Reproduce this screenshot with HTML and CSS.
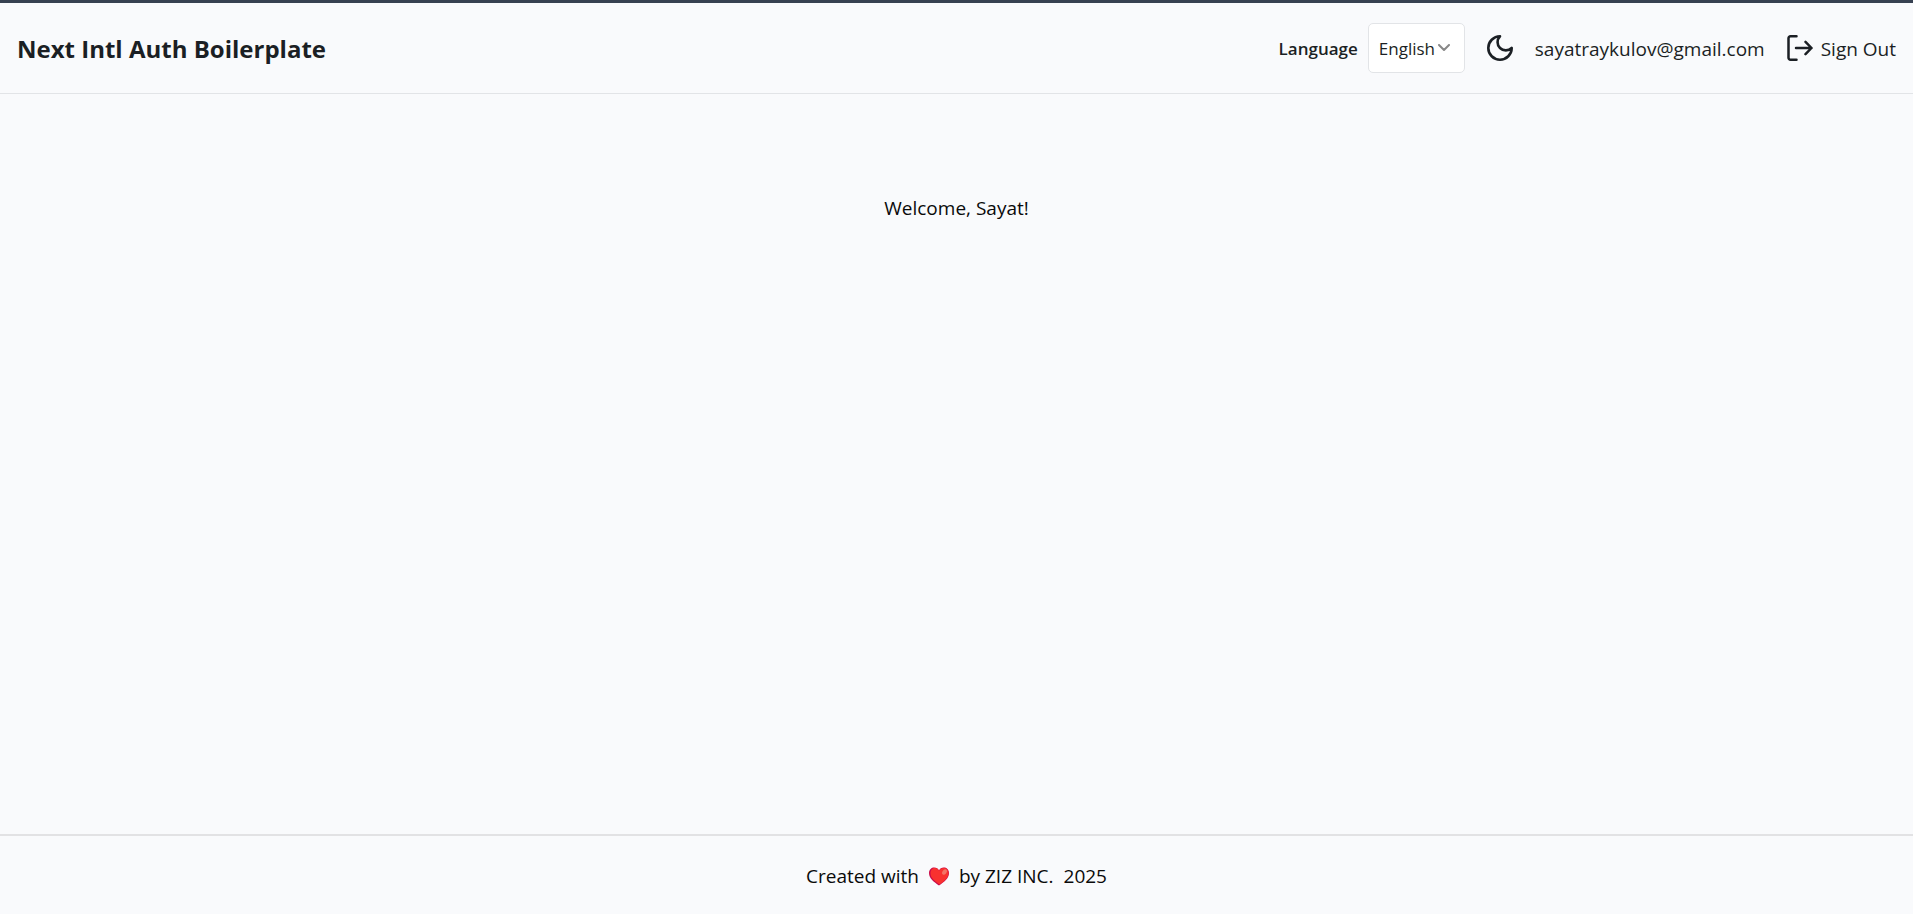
FILE: index.html
```html
<!DOCTYPE html>
<html lang="en">
<head>
<meta charset="utf-8">
<meta name="viewport" content="width=device-width, initial-scale=1">
<title>Next Intl Auth Boilerplate</title>
<link rel="stylesheet" href="styles.css">
</head>
<body>
<header class="header">
  <a class="brand" href="#">Next Intl Auth Boilerplate</a>
  <div class="actions">
    <div class="language">
      <label class="language-label" for="language">Language</label>
      <div class="select-wrap">
        <select class="select" id="language">
          <option>English</option>
        </select>
        <svg class="chevron" viewBox="0 0 12 8" aria-hidden="true"><path d="M1 1l5 5 5-5"/></svg>
      </div>
    </div>
    <button class="theme" type="button" aria-label="Toggle theme">
      <svg class="moon" viewBox="2 2 20 20" aria-hidden="true"><path d="M12 3a6 6 0 0 0 9 9 9 9 0 1 1-9-9Z"/></svg>
    </button>
    <span class="email">sayatraykulov@gmail.com</span>
    <button class="sign-out" type="button">
      <svg class="exit" viewBox="0 0 26 26" aria-hidden="true"><path d="M9.500 1.300H3.500A2 2 0 0 0 1.500 3.300v19.400A2 2 0 0 0 3.500 24.700h6M9 13h15.500M18.500 6.800l6 6.200-6 6.200"/></svg>
      <span class="sign-out-label">Sign Out</span>
    </button>
  </div>
</header>
<main class="main">
  <p class="welcome">Welcome, Sayat!</p>
</main>
<footer class="footer">
  <span>Created with</span>
  <svg class="heart" viewBox="0 0 20 19" role="img" aria-label="love">
    <path class="heart-base" d="M10 18.500C5 15 0 11.500 0 6 0 2.500 2.500.5 5.200.5 7.500.5 9.200 1.800 10 3.500 10.800 1.800 12.500.5 14.800.5 17.500.5 20 2.500 20 6c0 5.500-5 9-10 12.500Z"/>
    <path class="heart-face" d="M10.500 17.500C6 14 1.500 11 1.500 6.500 1.500 3 3.500 1 5.800 1 8 1 9.400 2.200 10 4 10.800 2.200 12.500 1 14.800 1 17.500 1 19.500 3 19.500 6c0 5-4.500 8.500-9 11.500Z"/>
    <ellipse class="heart-shine" cx="15.500" cy="5" rx="2" ry="3" transform="rotate(35 15.500 5)"/>
  </svg>
  <span>by ZIZ INC.</span>
  <span>2025</span>
</footer>
</body>
</html>
```
FILE: styles.css
```css
* { box-sizing: border-box; }
body {
  display: flex;
  flex-direction: column;
  min-height: 100vh;
  margin: 0;
  border-top: 3px solid #374151;
  background: #f9fafc;
  color: #0a0a0a;
  font: 19px/28px "Segoe UI", "Open Sans", "Noto Sans", sans-serif;
}
button {
  padding: 0;
  border: 0;
  background: none;
  color: inherit;
  font: inherit;
  cursor: pointer;
}
svg { display: block; flex: none; fill: none; stroke: currentColor; stroke-linecap: round; stroke-linejoin: round; }
.header {
  display: flex;
  align-items: center;
  justify-content: space-between;
  padding: 20px 17px;
  border-bottom: 1px solid #e2e4e7;
  color: #1b1f24;
}
.brand, .language-label, .email, .sign-out-label { padding-top: 2px; }
.brand { color: inherit; font-size: 24px; font-weight: 700; line-height: 32px; text-decoration: none; }
.actions { display: flex; align-items: center; gap: 22px; }
.language { display: flex; align-items: center; gap: 10px; }
.language-label { font-size: 17px; font-weight: 600; }
.select-wrap { position: relative; }
.select {
  display: block;
  width: 97px;
  height: 50px;
  padding: 2px 10px 0;
  border: 1px solid #e2e4e7;
  border-radius: 5px;
  appearance: none;
  background: #fff;
  color: inherit;
  font: inherit;
  font-size: 17px;
}
.chevron { position: absolute; top: 21px; right: 15px; width: 12px; height: 8px; color: #888; stroke-width: 2; pointer-events: none; }
.moon { width: 26px; height: 26px; stroke-width: 2; }
.sign-out { display: flex; align-items: center; gap: 8px; }
.exit { width: 26px; height: 26px; stroke-width: 2.5; }
.main { flex: 1; padding: 100px 16px; text-align: center; }
.welcome { margin: 0; }
.footer {
  display: flex;
  align-items: center;
  justify-content: center;
  gap: 10px;
  padding: 26px 16px 24px;
  border-top: 2px solid #e2e2e4;
}
.heart { width: 20px; height: 19px; stroke: none; }
.heart-base { fill: #ca0b4a; }
.heart-face { fill: #f8312f; }
.heart-shine { fill: #f37366; }
```
